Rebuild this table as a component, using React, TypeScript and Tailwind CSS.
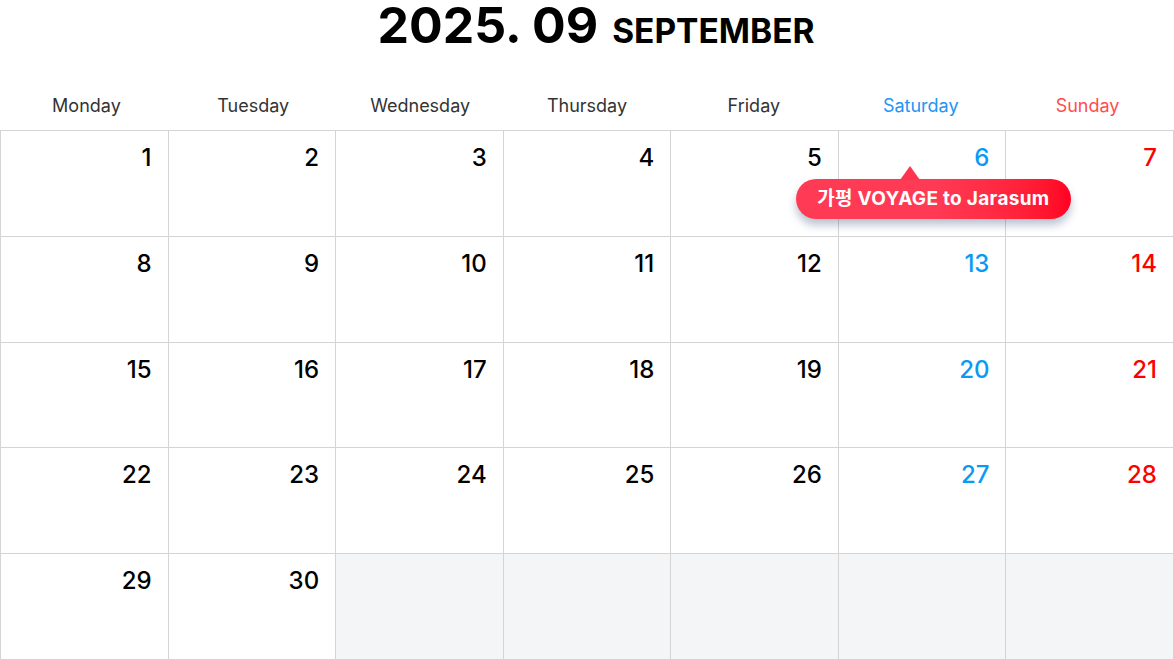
import React from "react";

const days = ["Monday", "Tuesday", "Wednesday", "Thursday", "Friday", "Saturday", "Sunday"];

export default function App() {
  const cells: (number | null)[] = [];
  for (let i = 1; i <= 30; i++) cells.push(i);
  while (cells.length < 35) cells.push(null);

  return (
    <div className="w-[1174px] h-[660px] bg-white overflow-hidden" style={{ fontFamily: "Inter, 'Noto Sans CJK KR', sans-serif" }}>
      <div className="h-[80px] flex items-start justify-center">
        <div className="flex items-baseline gap-[14px] leading-[50px] ml-[18px]">
          <span className="text-[50px] font-bold text-black">2025. 09</span>
          <span className="text-[33.5px] font-bold text-black">SEPTEMBER</span>
        </div>
      </div>
      <div className="grid grid-cols-7 h-[50px] items-center px-[3px]">
        {days.map((d, i) => (
          <div
            key={d}
            className={`text-center text-[18px] ${i === 5 ? "text-[#2196f3]" : i === 6 ? "text-[#ff4d4d]" : "text-[#333333]"}`}
          >
            {d}
          </div>
        ))}
      </div>
      <div className="grid grid-cols-7 grid-rows-5 h-[530px] border-l border-t border-[#d4d4d4]">
        {cells.map((n, idx) => {
          const col = idx % 7;
          const color = col === 5 ? "text-[#0a9af3]" : col === 6 ? "text-[#ff0000]" : "text-black";
          return (
            <div
              key={idx}
              className={`relative border-r border-b border-[#d4d4d4] ${n === null ? "bg-[#f4f5f7]" : "bg-white"}`}
            >
              {n !== null && (
                <div className={`text-right pr-[16px] pt-[12px] text-[24px] font-medium leading-[30px] ${color}`}>{n}</div>
              )}
              {n === 6 && (
                <div className="absolute left-[-43px] top-[48px] z-10">
                  <div className="absolute left-[104px] top-[-13px] w-0 h-0 border-l-[10px] border-r-[10px] border-b-[14px] border-l-transparent border-r-transparent border-b-[#ff3550]" />
                  <div className="h-[40px] w-[275px] rounded-full bg-gradient-to-r from-[#ff3a55] via-[#ff3a55] to-[#ff0022] shadow-[0_6px_8px_rgba(60,80,120,0.35)] flex items-center justify-center text-white text-[19px] font-bold tracking-[0.3px] whitespace-nowrap">
                    가평 VOYAGE to Jarasum
                  </div>
                </div>
              )}
            </div>
          );
        })}
      </div>
    </div>
  );
}
